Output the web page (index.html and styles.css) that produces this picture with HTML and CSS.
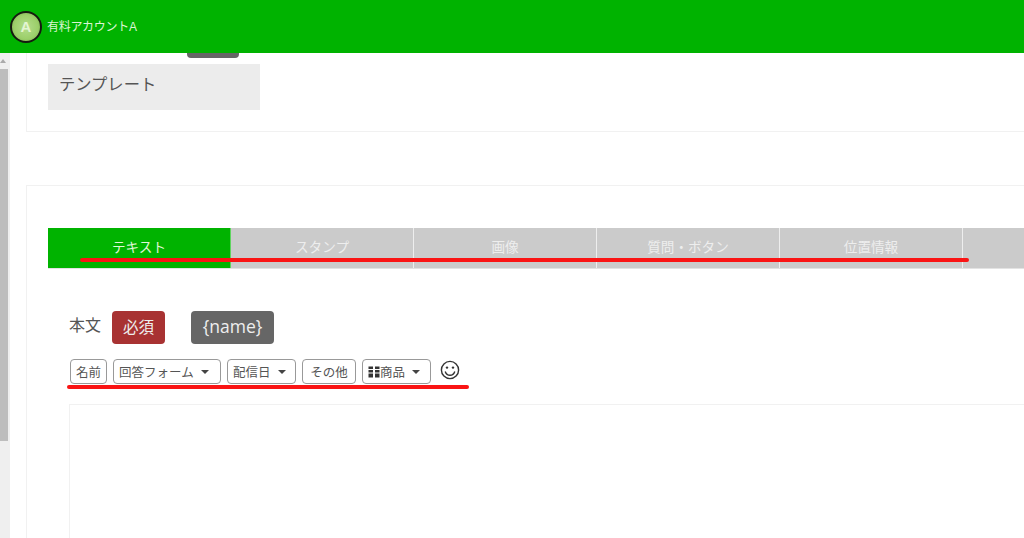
FILE: index.html
```html
<!DOCTYPE html>
<html lang="ja">
<head>
<meta charset="utf-8">
<title>テンプレート</title>
<link rel="stylesheet" href="styles.css">
</head>
<body>
<header class="topbar">
  <div class="avatar">A</div>
  <div class="account">有料アカウントA</div>
</header>
<div class="page">
  <aside class="scrollbar"><div class="scroll-arrow"></div><div class="scroll-thumb"></div></aside>
  <main class="content">
    <section class="card card-top">
      <div class="peek"></div>
      <div class="template-label">テンプレート</div>
    </section>
    <section class="card card-main">
      <nav class="tabs">
        <div class="tab tab-active">テキスト</div>
        <div class="tab">スタンプ</div>
        <div class="tab">画像</div>
        <div class="tab">質問・ボタン</div>
        <div class="tab">位置情報</div>
        <div class="tab tab-rest"></div>
      </nav>
      <div class="mark mark-tabs"></div>
      <div class="field-head">
        <span class="field-label">本文</span>
        <span class="badge badge-required">必須</span>
        <span class="badge badge-name">{name}</span>
      </div>
      <div class="tools">
        <span class="tool tool-name">名前</span>
        <span class="tool tool-menu tool-form">回答フォーム<i class="caret"></i></span>
        <span class="tool tool-menu tool-date">配信日<i class="caret"></i></span>
        <span class="tool tool-other">その他</span>
        <span class="tool tool-menu tool-product"><svg class="grid-icon" viewBox="0 0 12 12" width="12" height="12"><rect x="0.5" y="0.5" width="4.5" height="2.5"/><rect x="7" y="0.5" width="4.5" height="2.5"/><rect x="0.5" y="4" width="4.5" height="2.5"/><rect x="7" y="4" width="4.5" height="2.5"/><rect x="0.5" y="7.5" width="4.5" height="4"/><rect x="7" y="7.5" width="4.5" height="4"/></svg>商品<i class="caret"></i></span>
        <svg class="smile" viewBox="0 0 20 20" width="20" height="20"><circle cx="10" cy="10" r="8.6"/><circle class="eye" cx="7" cy="7.6" r="1.2"/><circle class="eye" cx="13" cy="7.6" r="1.2"/><path d="M5.2 11.4c.9 2.6 2.7 3.9 4.8 3.9s3.9-1.3 4.8-3.9"/></svg>
      </div>
      <div class="mark mark-tools"></div>
      <div class="editor"></div>
    </section>
  </main>
</div>
</body>
</html>
```
FILE: styles.css
```css
* { box-sizing: border-box; }
html, body { margin: 0; height: 538px; overflow: hidden; background: #fff; }
body { font-family: "Liberation Sans", "Noto Sans CJK JP", sans-serif; color: #555; }
.topbar { height: 53px; background: #00b300; display: flex; align-items: center; padding-left: 10px; position: relative; z-index: 2; }
.avatar { width: 32px; height: 32px; border-radius: 50%; background: radial-gradient(circle, #b4dd8c 0, #9ccf6a 60%, #6f9f45 100%); border: 2.5px solid #151a10; color: #e4f5d2; font-size: 15px; font-weight: 700; display: flex; align-items: center; justify-content: center; }
.account { margin-left: 5px; padding-bottom: 2px; color: #dcf5d4; font-size: 12px; letter-spacing: -0.3px; }
.page { display: flex; height: 485px; }
.scrollbar { width: 10px; background: #efefef; flex: none; }
.scroll-arrow { height: 16px; position: relative; }
.scroll-arrow::after { content: ""; position: absolute; left: 0; top: 6px; border: 3.5px solid transparent; border-top: 0; border-bottom: 4px solid #aaa; }
.scroll-thumb { width: 8px; height: 372px; background: #bdbdbd; }
.content { flex: 1; min-width: 0; padding-left: 16px; overflow: hidden; }
.card { background: #fff; border: 1px solid #f1f1f1; border-right: 0; }
.card-top { height: 80px; margin-top: -1px; padding: 12px 0 0 21px; border-top: 0; position: relative; }
.peek { position: absolute; left: 160px; top: 0; width: 52px; height: 6px; background: #666; border-radius: 0 0 4px 4px; }
.template-label { width: 212px; height: 46px; background: #ececec; color: #555; font-size: 16.3px; line-height: 41px; padding-left: 11px; }
.card-main { margin-top: 53px; height: 360px; padding: 42px 0 0 21px; position: relative; }
.tabs { display: flex; height: 41px; border-bottom: 1px solid #e3e3e3; }
.tab { width: 183px; background: #cbcbcb; color: #eee; font-size: 13.6px; text-align: center; line-height: 39px; border-right: 1px solid #eee; flex: none; }
.tab-active { background: #00b300; color: #e0f7da; border-right-color: #5fd45f; }
.tab-rest { flex: 1; border-right: 0; }
.mark { position: absolute; background: #fa1414; border-radius: 2px; }
.mark-tabs { left: 53px; top: 72px; width: 889px; height: 4px; }
.mark-tools { left: 40px; top: 199px; width: 402px; height: 4px; }
.field-head { display: flex; align-items: center; margin: 42px 0 0 21px; height: 33px; }
.field-label { font-size: 16px; color: #555; width: 43px; padding-bottom: 7px; }
.badge { height: 33px; border-radius: 4px; color: #eee; display: flex; align-items: center; justify-content: center; padding-bottom: 3px; }
.badge-required { width: 53px; background: #a83232; font-size: 15.5px; }
.badge-name { width: 83px; margin-left: 26px; background: #666; font-family: "Open Sans", "Liberation Sans", sans-serif; font-size: 17.5px; }
.tools { display: flex; align-items: center; margin: 15px 0 0 22px; height: 25px; position: relative; }
.tool { height: 25px; margin-right: 6px; border: 1px solid #999; border-radius: 4px; background: #fff; color: #555; font-size: 12.5px; display: flex; align-items: center; justify-content: center; flex: none; white-space: nowrap; }
.tool-menu { justify-content: flex-start; padding-left: 5px; }
.tool-name { width: 37px; }
.tool-form { width: 108px; }
.tool-date { width: 69px; }
.tool-other { width: 54px; }
.tool-product { width: 69px; }
.caret { display: inline-block; margin-left: 7px; border: 4px solid transparent; border-top: 4px solid #444; border-bottom: 0; }
.grid-icon { fill: #333; flex: none; }
.smile { margin: -3px 0 0 3px; flex: none; fill: none; stroke: #333; stroke-width: 1.4; }
.smile .eye { fill: #333; stroke: none; }
.editor { margin: 20px 0 0 21px; height: 140px; border: 1px solid #f1f1f1; border-right: 0; }
```
